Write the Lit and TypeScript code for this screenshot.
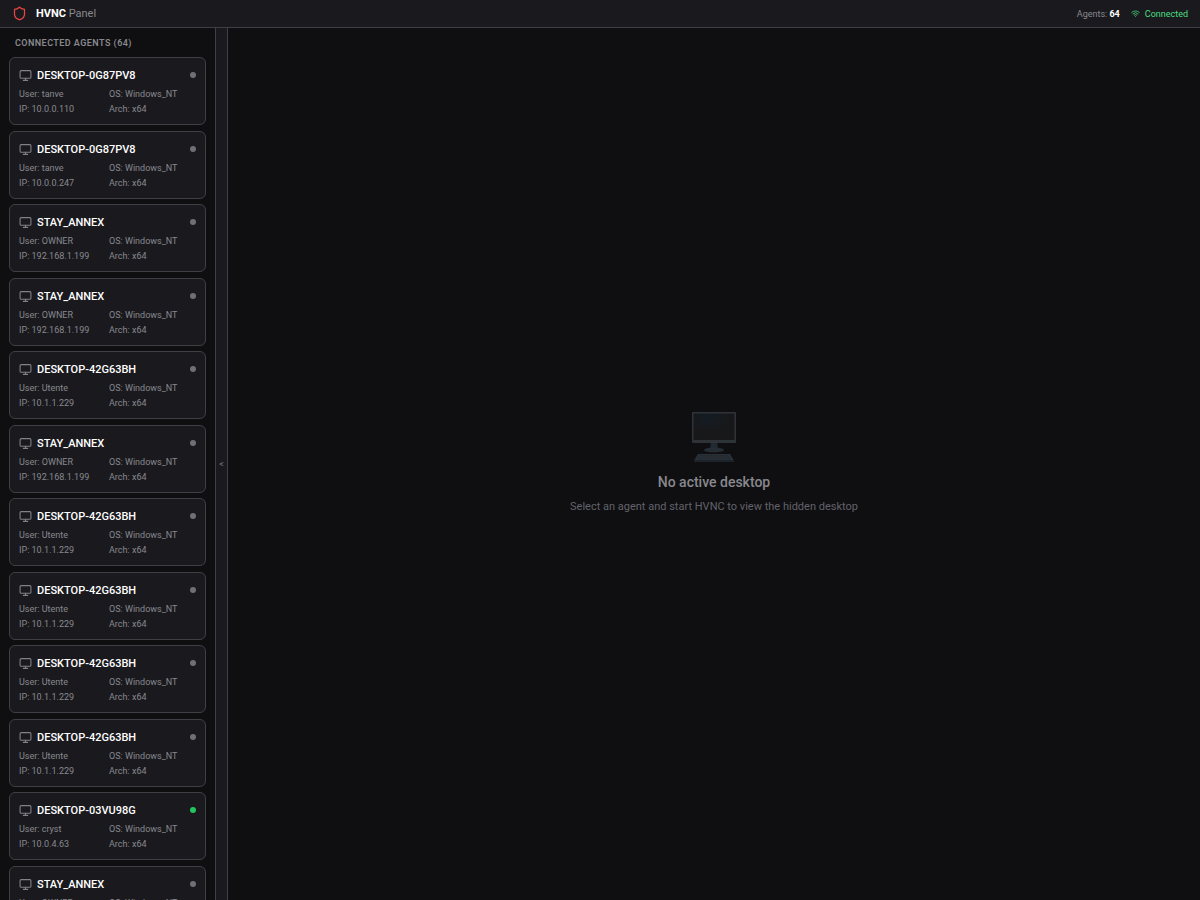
import { LitElement, html, svg, css } from "lit";
import { customElement, property, state } from "lit/decorators.js";

interface Agent {
  host: string;
  user: string;
  ip: string;
  online?: boolean;
}

const annex: Agent = { host: "STAY_ANNEX", user: "OWNER", ip: "192.168.1.199" };
const utente: Agent = { host: "DESKTOP-42G63BH", user: "Utente", ip: "10.1.1.229" };

const AGENTS: Agent[] = [
  { host: "DESKTOP-0G87PV8", user: "tanve", ip: "10.0.0.110" },
  { host: "DESKTOP-0G87PV8", user: "tanve", ip: "10.0.0.247" },
  annex,
  annex,
  utente,
  annex,
  utente,
  utente,
  utente,
  utente,
  { host: "DESKTOP-03VU98G", user: "cryst", ip: "10.0.4.63", online: true },
  annex,
];

@customElement("agent-card")
export class AgentCard extends LitElement {
  @property({ attribute: false }) agent!: Agent;

  static styles = css`
    :host {
      display: block;
    }
    .card {
      display: block;
      box-sizing: border-box;
      width: 100%;
      height: 68px;
      padding: 8px 9px;
      border: 1px solid #3f3f46;
      border-radius: 6px;
      background: #1a1a1e;
      color: #88888e;
      font: inherit;
      text-align: left;
      cursor: pointer;
    }
    .top {
      display: flex;
      align-items: center;
      height: 18px;
      margin-bottom: 3px;
    }
    .icon {
      width: 13px;
      height: 13px;
      margin-right: 5px;
      color: #808086;
    }
    .host {
      flex: 1;
      color: #fff;
      font-size: 11px;
      font-weight: 500;
    }
    .dot {
      width: 6px;
      height: 6px;
      border-radius: 50%;
      background: #6f6f75;
    }
    .dot.online {
      background: #22c55e;
    }
    .meta {
      display: grid;
      grid-template-columns: 1fr 1fr;
      column-gap: 3px;
      font-size: 9px;
      line-height: 15px;
      white-space: nowrap;
    }
  `;

  render() {
    const a = this.agent;
    return html`<button class="card" type="button">
      <span class="top">
        <svg class="icon" viewBox="0 0 24 24" fill="none" stroke="currentColor" stroke-width="2" stroke-linecap="round" stroke-linejoin="round" aria-hidden="true">
          <rect x="2" y="3" width="20" height="14" rx="2"></rect>
          <path d="M8 21h8M12 17v4"></path>
        </svg>
        <span class="host">${a.host}</span>
        <span class="dot ${a.online ? "online" : ""}"></span>
      </span>
      <span class="meta">
        <span>User: ${a.user}</span><span>OS: Windows_NT</span>
        <span>IP: ${a.ip}</span><span>Arch: x64</span>
      </span>
    </button>`;
  }
}

@customElement("app-root")
export class AppRoot extends LitElement {
  @state() private collapsed = false;

  static styles = css`
    :host {
      display: flex;
      flex-direction: column;
      height: 100vh;
      overflow: hidden;
      background: #0f0f11;
      color: #88888e;
      font-family: Roboto, "Liberation Sans", sans-serif;
    }
    .header {
      display: flex;
      align-items: center;
      justify-content: space-between;
      box-sizing: border-box;
      height: 28px;
      padding: 0 12px;
      border-bottom: 1px solid #3f3f46;
      background: #1a1a1e;
    }
    .brand,
    .status,
    .link {
      display: flex;
      align-items: center;
    }
    .brand {
      gap: 9px;
    }
    .brand h1 {
      margin: 0;
      font-size: 11px;
      font-weight: 400;
    }
    .brand strong,
    .status strong {
      color: #fff;
      font-weight: 700;
    }
    .shield {
      width: 15px;
      height: 15px;
      color: #ef4444;
    }
    .status {
      gap: 11px;
      font-size: 9px;
    }
    .link {
      gap: 5px;
      color: #4ade80;
    }
    .wifi {
      width: 9px;
      height: 9px;
    }
    .body {
      display: flex;
      flex: 1;
      min-height: 0;
    }
    .sidebar {
      flex: none;
      box-sizing: border-box;
      width: 216px;
      padding: 1px 9px 0;
      overflow: hidden;
      border-right: 1px solid #3f3f46;
    }
    .sidebar h2 {
      margin: 0;
      padding: 0 6px;
      font-size: 9px;
      font-weight: 600;
      line-height: 28px;
      letter-spacing: 0.05em;
    }
    .list {
      margin: 0;
      padding: 0;
      list-style: none;
    }
    .list li {
      margin-bottom: 6px;
    }
    .list li:nth-child(even) {
      margin-bottom: 5px;
    }
    .toggle {
      flex: none;
      box-sizing: border-box;
      width: 12px;
      padding: 0;
      border: 0;
      border-right: 1px solid #3f3f46;
      background: #1a1a1e;
      color: #77777d;
      font-family: inherit;
      font-size: 9px;
      cursor: pointer;
    }
    .stage {
      display: flex;
      flex: 1;
      flex-direction: column;
      align-items: center;
      justify-content: center;
      padding-top: 2px;
      text-align: center;
    }
    .computer {
      width: 46px;
      height: 52px;
      margin-bottom: 7px;
    }
    .stage h3 {
      margin: 0;
      font-size: 14px;
      font-weight: 500;
      line-height: 24px;
    }
    .stage p {
      margin: 0;
      color: #62626a;
      font-size: 11px;
      line-height: 26px;
    }
  `;

  private computer() {
    return svg`<svg class="computer" viewBox="0 0 46 52" aria-hidden="true">
      <defs>
        <radialGradient id="glow" cx="0.35" cy="0.15" r="0.55">
          <stop offset="0" stop-color="#131c23"></stop>
          <stop offset="1" stop-color="#18181a"></stop>
        </radialGradient>
      </defs>
      <path d="M20 30h6l1 9h-8z" fill="#222a31"></path>
      <ellipse cx="23" cy="39" rx="10" ry="2.5" fill="#252d34"></ellipse>
      <rect x="1" y="1" width="44" height="31" rx="1" fill="#2e3338"></rect>
      <rect x="2.500" y="2.500" width="41" height="26.500" fill="url(#glow)"></rect>
      <path d="M7 43h32l4 6.500H3z" fill="#2a3037"></path>
      <path d="M3 49.500h40v1.500H3z" fill="#1d252c"></path>
      <path d="M8.500 44.500h29M7.500 46h31M6.500 47.700h33" stroke="#1f2429" stroke-width="0.6" stroke-dasharray="1.4 0.9"></path>
    </svg>`;
  }

  render() {
    return html`
      <header class="header">
        <div class="brand">
          <svg class="shield" viewBox="0 0 24 24" fill="none" stroke="currentColor" stroke-width="2" stroke-linejoin="round" aria-hidden="true">
            <path d="M20 13c0 5-3.500 7.500-7.660 8.950a1 1 0 0 1-.67-.010C7.500 20.500 4 18 4 13V6a1 1 0 0 1 1-1c2 0 4.500-1.200 6.240-2.720a1.170 1.170 0 0 1 1.520 0C14.510 3.810 17 5 19 5a1 1 0 0 1 1 1z"></path>
          </svg>
          <h1><strong>HVNC</strong> Panel</h1>
        </div>
        <div class="status">
          <span>Agents: <strong>64</strong></span>
          <span class="link">
            <svg class="wifi" viewBox="0 0 24 24" fill="none" stroke="currentColor" stroke-width="2" stroke-linecap="round" aria-hidden="true">
              <path d="M12 20h.01M2 8.820a15 15 0 0 1 20 0M5 12.860a10 10 0 0 1 14 0M8.500 16.430a5 5 0 0 1 7 0"></path>
            </svg>
            Connected
          </span>
        </div>
      </header>
      <div class="body">
        ${this.collapsed
          ? null
          : html`<aside class="sidebar">
              <h2>CONNECTED AGENTS (64)</h2>
              <ul class="list">
                ${AGENTS.map((a) => html`<li><agent-card .agent=${a}></agent-card></li>`)}
              </ul>
            </aside>`}
        <button class="toggle" type="button" aria-label="Toggle agent list" @click=${() => (this.collapsed = !this.collapsed)}>&lt;</button>
        <main class="stage">
          ${this.computer()}
          <h3>No active desktop</h3>
          <p>Select an agent and start HVNC to view the hidden desktop</p>
        </main>
      </div>
    `;
  }
}
